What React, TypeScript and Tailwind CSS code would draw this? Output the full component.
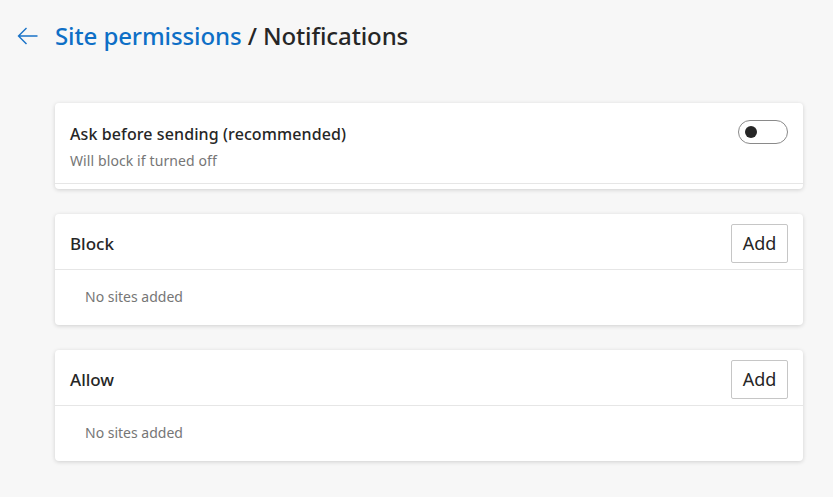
import React from "react";

function Card({ title }: { title: string }) {
  return (
    <div className="bg-white rounded-[4px] shadow-[0_1px_4px_rgba(0,0,0,0.16)]">
      <div className="h-[56px] flex items-start justify-between pt-[10px] pl-[15px] pr-[15px] border-b border-[#e6e6e6]">
        <div className="leading-[40px] text-[17px] font-medium text-[#262626]">{title}</div>
        <button className="w-[57px] h-[39px] border border-[#c6c6c6] rounded-[2px] bg-white text-[18px] text-[#262626] flex items-center justify-center">
          Add
        </button>
      </div>
      <div className="h-[55px] flex items-center pb-[3px] pl-[30px] text-[14px] text-[#767676]">No sites added</div>
    </div>
  );
}

export default function App() {
  return (
    <div className="w-[833px] h-[497px] bg-[#f7f7f7] font-['Noto_Sans',sans-serif] overflow-hidden">
      <div className="flex items-center h-[36px] mt-[18px]">
        <svg className="ml-[17px] w-[21px] h-[18px]" viewBox="0 0 21 18" fill="none" stroke="#1a73c8" strokeWidth="1.4">
          <path d="M20.5 9H1.5M9.5 1L1.5 9l8 8" />
        </svg>
        <div className="ml-[17px] text-[24px] font-medium leading-[36px] tracking-[-0.1px]">
          <span className="text-[#0e6fc6]">Site permissions</span>
          <span className="text-[#262626]"> / Notifications</span>
        </div>
      </div>
      <div className="ml-[55px] w-[748px] mt-[49px] flex flex-col gap-[25px]">
        <div className="bg-white rounded-[4px] shadow-[0_1px_4px_rgba(0,0,0,0.16)] h-[86px] pb-[5px]">
          <div className="h-full border-b border-[#e6e6e6] flex justify-between items-start pl-[15px] pr-[15px] pt-[17px]">
            <div className="mt-[3px]">
              <div className="text-[16px] font-medium text-[#262626] leading-[22px] tracking-[0.1px]">Ask before sending (recommended)</div>
              <div className="text-[14px] text-[#767676] leading-[20px] mt-[6px] tracking-[0.1px]">Will block if turned off</div>
            </div>
            <div className="w-[50px] h-[24px] rounded-full border border-[#8a8a8a] flex items-center pl-[6px]">
              <div className="w-[12px] h-[12px] rounded-full bg-[#262626]" />
            </div>
          </div>
        </div>
        <Card title="Block" />
        <Card title="Allow" />
      </div>
    </div>
  );
}
